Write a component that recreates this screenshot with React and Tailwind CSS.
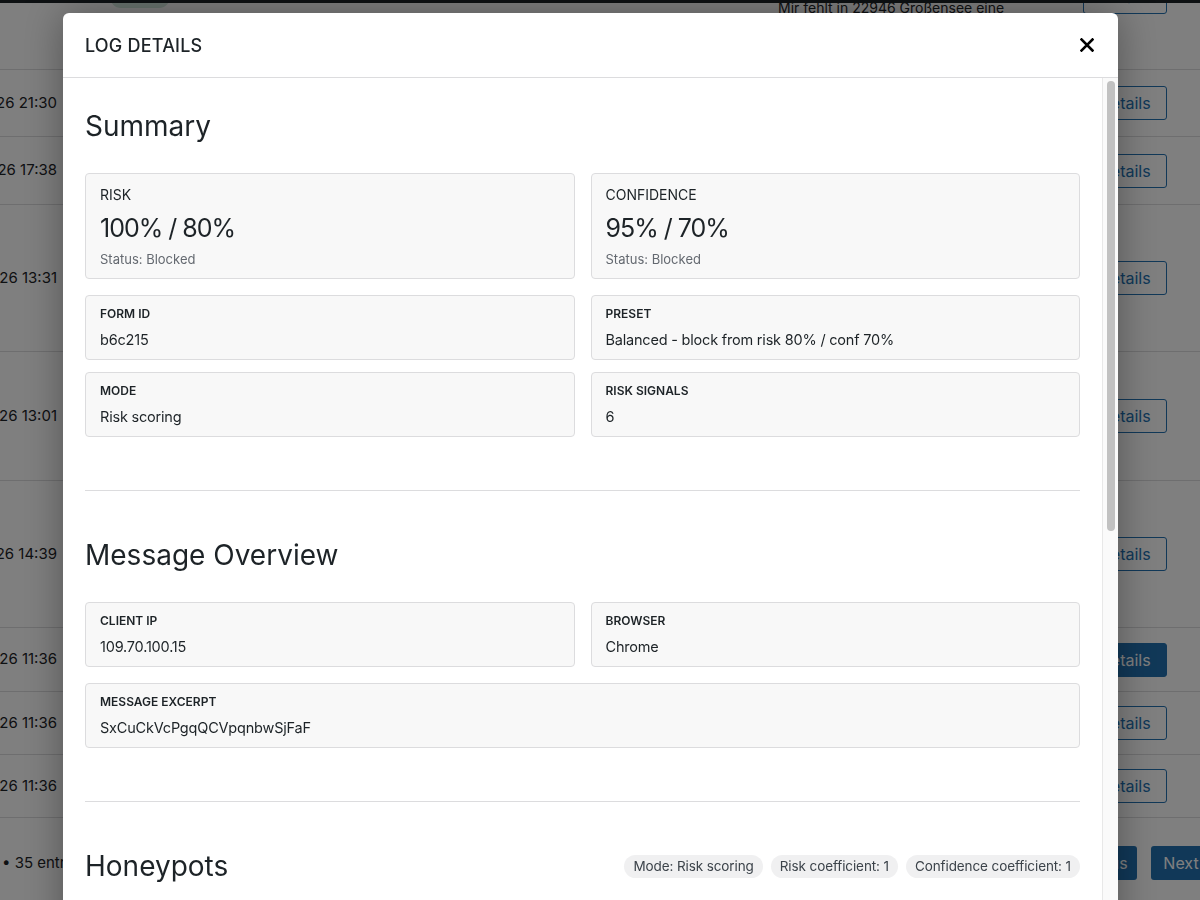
import React from 'react';

const rows = [
  { date: '15.01.2026 21:30', h: 'h-[67px]' },
  { date: '15.01.2026 17:38', h: 'h-[68px]' },
  { date: '14.01.2026 13:31', h: 'h-[147px]' },
  { date: '14.01.2026 13:01', h: 'h-[129px]' },
  { date: '13.01.2026 14:39', h: 'h-[147px]' },
  { date: '13.01.2026 11:36', h: 'h-[64px]', active: true },
  { date: '13.01.2026 11:36', h: 'h-[63px]' },
  { date: '13.01.2026 11:36', h: 'h-[63px]' },
];

const SummaryCard = ({ label, value, status }) => (
  <div className="rounded-[4px] border border-[#dcdcde] bg-[#f8f8f8] px-[14px] pt-[11px] pb-[10px]">
    <div className="text-[14px] leading-[20px] text-[#1d2327]">{label}</div>
    <div className="mt-[7px] text-[25px] leading-[32px] tracking-[-1px] text-[#1d2327]">{value}</div>
    <div className="mt-[6px] text-[13px] leading-[18px] text-[#646970]">{status}</div>
  </div>
);

const FieldCard = ({ label, value, wide }) => (
  <div className={`rounded-[4px] border border-[#dcdcde] bg-[#f8f8f8] px-[14px] pt-[10px] pb-[9px] ${wide ? 'col-span-2' : ''}`}>
    <div className="text-[12px] font-semibold uppercase leading-[16px] text-[#1d2327]">{label}</div>
    <div className="mt-2 text-[14.5px] leading-[20px] tracking-[-0.2px] text-[#1d2327]">{value}</div>
  </div>
);

const Badge = ({ children }) => (
  <span className="flex h-[23px] items-center rounded-full bg-[#f0f0f1] px-[9px] text-[13.5px] tracking-[-0.1px] text-[#3c434a]">
    {children}
  </span>
);

export default function App() {
  return (
    <div className="relative h-screen w-full overflow-hidden bg-white font-['Inter',sans-serif] text-[#1d2327]">
      {/* page behind the dialog */}
      <div className="-mt-[30px] w-[1220px]">
        <div className="grid h-[100px] grid-cols-[63px_715px_305px_84px] items-start border-b border-[#dcdcde]">
          <div />
          <div className="pl-[47px] pt-[16px]">
            <span className="flex h-[22px] w-[60px] items-center justify-center rounded-full bg-[#d1e7dd] text-[12px] text-[#0f5132]">Passed</span>
          </div>
          <div className="pt-[8px] text-[14px] leading-[20px] text-[#1d2327]">
            <div>Hallo, ich bin auf der Suche nach</div>
            <div>Mir fehlt in 22946 Großensee eine</div>
          </div>
          <div className="pt-[10px]">
            <button className="h-[34px] w-[84px] rounded-[3px] border border-[#2271b1] text-[16px] text-[#2271b1]">Details</button>
          </div>
        </div>

        {rows.map((r, i) => (
          <div key={i} className={`grid ${r.h} grid-cols-[63px_715px_305px_84px] items-center border-b border-[#dcdcde]`}>
            <div className="flex justify-end overflow-hidden whitespace-nowrap pr-[6px] text-[15px] text-[#1d2327]">{r.date}</div>
            <div />
            <div />
            <button
              className={
                r.active
                  ? 'h-[34px] w-[84px] rounded-[3px] border border-[#2271b1] bg-[#2271b1] text-[16px] text-white'
                  : 'h-[34px] w-[84px] rounded-[3px] border border-[#2271b1] text-[16px] text-[#2271b1]'
              }
            >
              Details
            </button>
          </div>
        ))}

        <div className="flex h-[82px] items-start justify-between pr-[9px] pt-[28px]">
          <div className="flex h-[34px] items-center pl-[2px] text-[15px] text-[#1d2327]">• 35 entries</div>
          <div className="flex gap-[14px]">
            <button className="h-[34px] w-[84px] rounded-[3px] bg-[#2271b1] text-[16px] text-white">Previous</button>
            <button className="h-[34px] w-[60px] rounded-[3px] bg-[#2271b1] text-[16px] text-white">Next</button>
          </div>
        </div>
      </div>

      <div className="fixed inset-x-0 top-0 h-[3px] bg-[#1d2327]" />

      {/* overlay */}
      <div className="fixed inset-0 bg-black/50" />

      {/* dialog */}
      <div className="fixed left-[63px] top-[13px] flex h-[940px] w-[1055px] flex-col overflow-hidden rounded-[6px] bg-white shadow-[0_0_40px_rgba(0,0,0,0.35)]">
        <div className="flex h-[65px] shrink-0 items-center justify-between border-b border-[#dcdcde] pl-[22px] pr-[24px]">
          <h1 className="text-[18px] font-medium tracking-[0.2px] text-[#1d2327]">LOG DETAILS</h1>
          <button aria-label="Close" className="flex h-[14px] w-[14px] items-center justify-center text-black">
            <svg width="14" height="14" viewBox="0 0 14 14" fill="none" stroke="currentColor" strokeWidth="2.6" strokeLinecap="square">
              <path d="M1.5 1.5 12.5 12.5M12.5 1.5 1.5 12.5" />
            </svg>
          </button>
        </div>

        <div className="flex min-h-0 flex-1">
          <div className="min-w-0 flex-1 overflow-hidden px-[22px]">
            {/* Summary */}
            <section className="pt-[31px]">
              <h2 className="mb-[30px] text-[28px] leading-[34px] text-[#1d2327]">Summary</h2>
              <div className="grid grid-cols-2 gap-4">
                <SummaryCard label="RISK" value="100% / 80%" status="Status: Blocked" />
                <SummaryCard label="CONFIDENCE" value="95% / 70%" status="Status: Blocked" />
              </div>
              <div className="mt-4 grid grid-cols-2 gap-x-4 gap-y-3">
                <FieldCard label="Form ID" value="b6c215" />
                <FieldCard label="Preset" value="Balanced - block from risk 80% / conf 70%" />
                <FieldCard label="Mode" value="Risk scoring" />
                <FieldCard label="Risk signals" value="6" />
              </div>
            </section>

            <hr className="mt-[53px] border-[#dcdcde]" />

            {/* Message Overview */}
            <section className="pt-[47px]">
              <h2 className="mb-[30px] text-[28px] leading-[34px] text-[#1d2327]">Message Overview</h2>
              <div className="grid grid-cols-2 gap-4">
                <FieldCard label="Client IP" value="109.70.100.15" />
                <FieldCard label="Browser" value="Chrome" />
                <FieldCard label="Message excerpt" value="SxCuCkVcPgqQCVpqnbwSjFaF" wide />
              </div>
            </section>

            <hr className="mt-[53px] border-[#dcdcde]" />

            {/* Honeypots */}
            <section className="pt-[47px]">
              <div className="flex items-center justify-between">
                <h2 className="text-[28px] leading-[34px] text-[#1d2327]">Honeypots</h2>
                <div className="flex gap-[8px]">
                  <Badge>Mode: Risk scoring</Badge>
                  <Badge>Risk coefficient: 1</Badge>
                  <Badge>Confidence coefficient: 1</Badge>
                </div>
              </div>
            </section>
          </div>

          {/* scrollbar */}
          <div className="flex w-[16px] shrink-0 justify-center border-l border-[#e8e8e8] bg-[#fafafa] pt-[3px]">
            <div className="h-[450px] w-[8px] rounded-full bg-[#c1c1c1]" />
          </div>
        </div>
      </div>
    </div>
  );
}
